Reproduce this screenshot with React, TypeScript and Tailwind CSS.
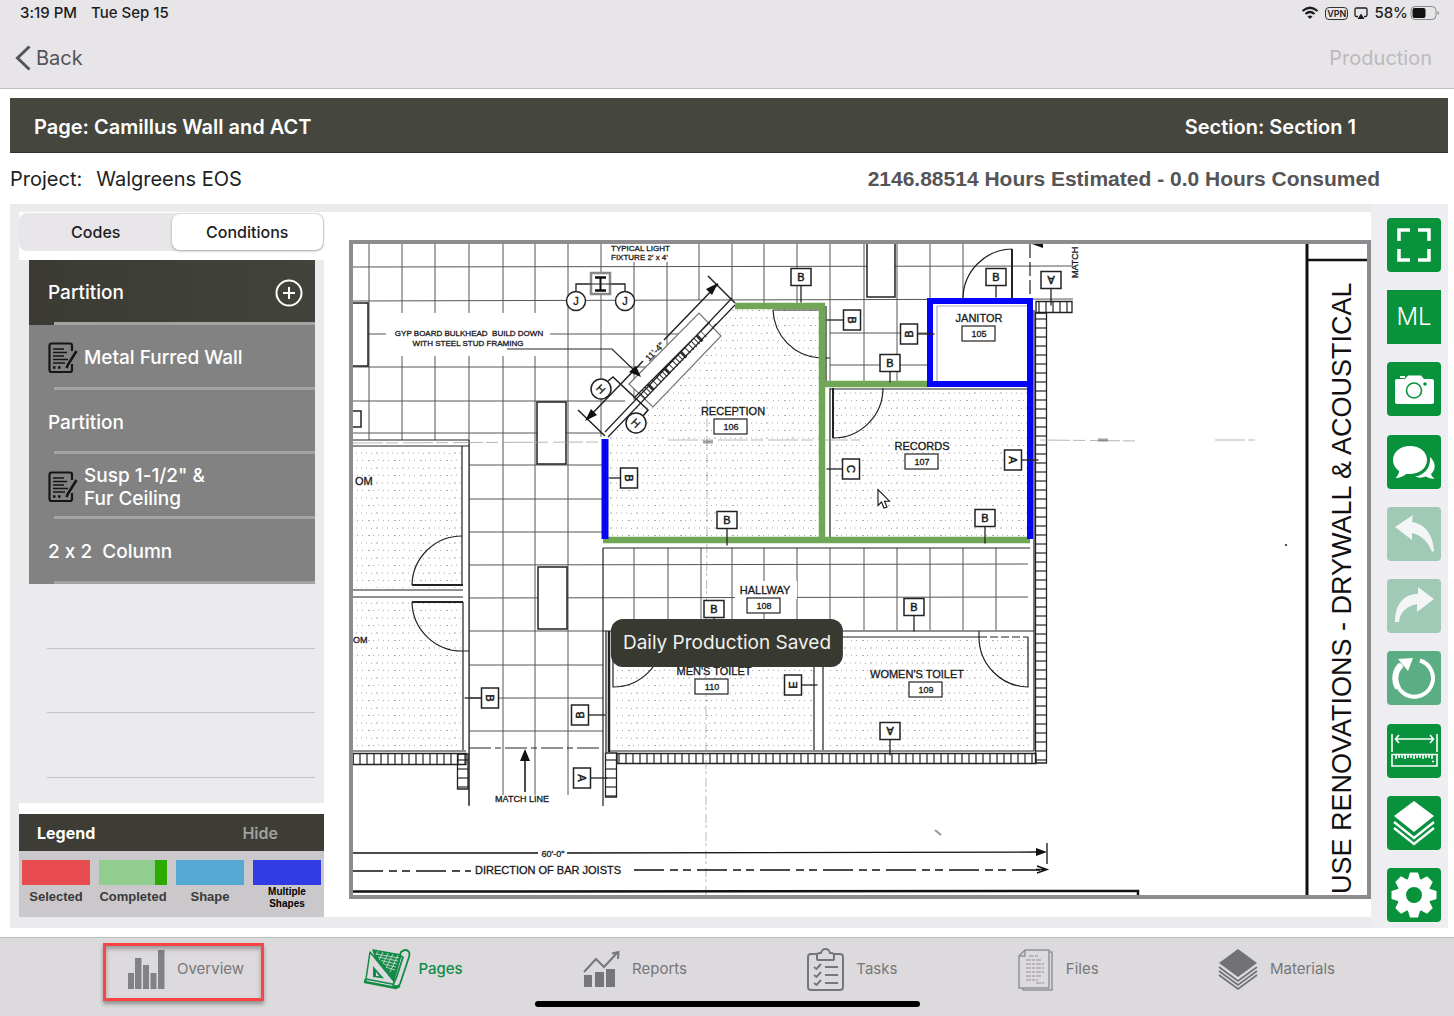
import React, { useState, ReactNode } from 'react';
import clsx from 'clsx';

interface Condition {
  name: string;
  note?: boolean;
}

interface Tag {
  x: number;
  y: number;
  label: string;
  rotate?: number;
  side: 'down' | 'left' | 'right';
  length: number;
}

interface Room {
  name: string;
  number: string;
  x: number;
  y: number;
  boxX: number;
}

const conditions: Condition[] = [
  { name: 'Partition' },
  { name: 'Metal Furred Wall', note: true },
  { name: 'Partition' },
  { name: 'Susp 1-1/2" &\nFur Ceiling', note: true },
  { name: '2 x 2  Column' },
];

const tags: Tag[] = [
  { x: 801, y: 277, label: 'B', side: 'down', length: 17 },
  { x: 852, y: 320, label: 'B', rotate: 90, side: 'left', length: 17 },
  { x: 909, y: 334, label: 'B', rotate: -90, side: 'right', length: 17 },
  { x: 890, y: 363, label: 'B', side: 'down', length: 11 },
  { x: 996, y: 277, label: 'B', side: 'down', length: 12 },
  { x: 1051, y: 280, label: 'A', rotate: 180, side: 'down', length: 17 },
  { x: 1013, y: 460, label: 'A', rotate: 90, side: 'right', length: 17 },
  { x: 851, y: 469, label: 'C', rotate: 90, side: 'left', length: 16 },
  { x: 985, y: 518, label: 'B', side: 'down', length: 17 },
  { x: 727, y: 520, label: 'B', side: 'down', length: 17 },
  { x: 629, y: 478, label: 'B', rotate: 90, side: 'left', length: 12 },
  { x: 714, y: 609, label: 'B', side: 'down', length: 12 },
  { x: 914, y: 607, label: 'B', side: 'down', length: 16 },
  { x: 793, y: 685, label: 'E', rotate: -90, side: 'right', length: 16 },
  { x: 890, y: 731, label: 'A', rotate: 180, side: 'down', length: 16 },
  { x: 490, y: 698, label: 'B', rotate: 90, side: 'left', length: 17 },
  { x: 580, y: 715, label: 'B', rotate: -90, side: 'right', length: 17 },
  { x: 582, y: 778, label: 'A', rotate: 90, side: 'right', length: 17 },
];

const rooms: Room[] = [
  { name: 'RECEPTION', number: '106', x: 733, y: 415, boxX: 731 },
  { name: 'RECORDS', number: '107', x: 922, y: 450, boxX: 922 },
  { name: 'JANITOR', number: '105', x: 979, y: 322, boxX: 979 },
  { name: 'HALLWAY', number: '108', x: 765, y: 594, boxX: 764 },
  { name: "MEN'S TOILET", number: '110', x: 714, y: 675, boxX: 712 },
  { name: "WOMEN'S TOILET", number: '109', x: 917, y: 678, boxX: 926 },
];

const legend = [
  { label: 'Selected', swatch: 'bg-[#e84c4e]' },
  { label: 'Completed', swatch: 'bg-[#90cd8e] border-r-[12px] border-[#2caa02]' },
  { label: 'Shape', swatch: 'bg-[#56a9d2]' },
  { label: 'Multiple Shapes', swatch: 'bg-[#323ae4]', small: true },
];

const gearTeeth = [0, 45, 90, 135, 180, 225, 270, 315];

// ---------- floor plan ----------

function PlanTag({ x, y, label, rotate = 0, side, length }: Tag) {
  const w = side === 'down' ? 20 : 17;
  const h = side === 'down' ? 17 : 20;
  const leader = {
    down: `M${x} ${y + h / 2}v${length}`,
    left: `M${x - w / 2} ${y}h${-length}`,
    right: `M${x + w / 2} ${y}h${length}`,
  }[side];
  return (
    <g>
      <rect x={x - w / 2} y={y - h / 2} width={w} height={h} fill="#fff" stroke="#222" strokeWidth="1.5" />
      <path d={leader} stroke="#222" strokeWidth="1.3" />
      <text
        x={x}
        y={y + 4}
        fontSize="11"
        textAnchor="middle"
        stroke="#222"
        strokeWidth="0.5"
        transform={`rotate(${rotate} ${x} ${y})`}
      >
        {label}
      </text>
    </g>
  );
}

function PlanRoom({ name, number, x, y, boxX }: Room) {
  return (
    <g>
      <text x={x} y={y} fontSize="11" textAnchor="middle" stroke="#222" strokeWidth="0.3">{name}</text>
      <rect x={boxX - 17} y={y + 4} width="33" height="15" fill="#fff" stroke="#222" strokeWidth="1.2" />
      <text x={boxX} y={y + 15} fontSize="9" textAnchor="middle" stroke="#222" strokeWidth="0.3">{number}</text>
    </g>
  );
}

function FloorPlan() {
  return (
    <svg
      viewBox="353 244 1014 651"
      preserveAspectRatio="xMidYMid slice"
      className="block h-full w-full font-['Liberation_Sans',sans-serif]"
      fill="#111"
      role="img"
      aria-label="Floor plan"
    >
      <defs>
        <pattern id="dots" width="26" height="15" patternUnits="userSpaceOnUse">
          <path
            d="M2 3h1M7 3.5h1M12 3h2M18 3h1M23 3h1M4 10.5h2M9 10.5h1M14 10h1M19 10.5h1M24 10.5h1"
            stroke="#aaa"
            strokeWidth="1"
          />
        </pattern>
        <pattern id="hatchH" width="7" height="20" patternUnits="userSpaceOnUse">
          <path d="M3 0v20" stroke="#222" strokeWidth="1.2" />
        </pattern>
        <pattern id="hatchV" width="20" height="9" patternUnits="userSpaceOnUse">
          <path d="M0 4h20" stroke="#222" strokeWidth="1.2" />
        </pattern>
      </defs>

      {/* ceiling grid */}
      <g stroke="#555" strokeWidth="1" fill="none">
        {[369, 402, 435].map(x => <path key={x} d={`M${x} 244V440`} />)}
        <path d="M469 244V805" />
        {[503, 535, 568].map(x => <path key={x} d={`M${x} 244V795`} />)}
        <path d="M601 244V437M634 262V400M667 262V345M699 244V300M732 244V300" />
        {[764, 797].map(x => <path key={x} d={`M${x} 244V303`} />)}
        {[830, 864, 897].map(x => <path key={x} d={`M${x} 244V383`} />)}
        {[930, 963].map(x => <path key={x} d={`M${x} 244V299`} />)}
        {[634, 668, 701, 732, 764, 797, 830, 864, 897, 930, 963, 996].map(x => (
          <path key={x} d={`M${x} 548V630`} />
        ))}
        <path d="M353 267L1073 266M353 301L1073 299M353 334H680M830 333H930M353 367H650M830 365H930M353 401H625M353 433H601" />
        {[465, 499, 532, 665, 698, 731].map(y => <path key={y} d={`M469 ${y}H603`} />)}
        <path d="M469 565L1028 564M469 598L1028 597M469 631H603" />
      </g>
      <path d="M386 313H550V356H386zM610 244H676V262H610zM735 581H797V599H735z" fill="#fff" />

      {/* rooms */}
      <path d="M605 436L735 303H826V541H605z" fill="#fff" />
      <path d="M605 440L735 308H820V536H609z" fill="url(#dots)" />
      <path d="M826 384H1035V548H826z" fill="#fff" />
      <path d="M834 390H1027V536H834z" fill="url(#dots)" />
      <path d="M930 300H1030V384H930z" fill="#fff" />
      <path d="M353 440H469V754H353z" fill="#fff" />
      <path d="M353 449H461V588H353zM353 600H461V748H353z" fill="url(#dots)" />
      <path d="M605 631H1035V752H605z" fill="#fff" />
      <path d="M613 640H813V748H613zM826 640H1030V748H826z" fill="url(#dots)" />

      <g stroke="#222" strokeWidth="1.2" fill="none">
        <path d="M353 440H469M353 446H469M462 446V585M469 440V806M353 590H463M353 597H463M463 602V750M353 751H466" />
        <path d="M412 585H463M412 602H463" strokeWidth="2" />
        <path d="M462 536A50 50 0 0 0 412 585M412 602A50 50 0 0 0 463 651H469" />
        <path d="M603 548V806M603 548H1030M603 631H1034M611 637H979M606 631V752M609 751H1034M814 637V750M823 637V750M1034 310V751" />
        <path d="M609 631V752" strokeWidth="2.5" />
        <path d="M613 637V687A50 50 0 0 0 663 637" />
        <path d="M979 631V637A50 50 0 0 0 1028 687V637" />
        <path d="M979 637H1028" strokeDasharray="8 3" />
        <path d="M773 310H823M773 310A50 50 0 0 0 820 358H830M826 306V384M830 388V540" />
        <path d="M833 388V438A50 50 0 0 0 883 388" />
        <path d="M833 388V438M1012 249V299" strokeWidth="2" />
        <path d="M1012 249A50 50 0 0 0 963 299M830 389H1030" />
        <path d="M1030 244V300" strokeDasharray="14 4" />
        <path d="M937 306V383M937 306H1028" stroke="#aab" />
        <path d="M469 748H603" strokeDasharray="22 4 6 4" />
      </g>

      {/* masonry */}
      <g stroke="#222" strokeWidth="1.3">
        <path d="M353 753.5H466V764.5H353z" fill="url(#hatchH)" />
        <path d="M457.5 754H468V789H457.5z" fill="url(#hatchV)" />
        <path d="M617 753.5H1036V763.5H617z" fill="url(#hatchH)" />
        <path d="M605.5 753H616.5V797H605.5z" fill="url(#hatchV)" />
        <path d="M1035.5 313H1046.5V763H1035.5z" fill="url(#hatchV)" />
        <path d="M1036 301.5H1072V312.5H1036z" fill="url(#hatchH)" />
      </g>

      {/* light fixtures */}
      <g fill="#fff" stroke="#222" strokeWidth="1.5">
        <path d="M867 240H895V297H867z" />
        <path d="M537 402H566V464H537z" />
        <path d="M538 567H567V629H538z" />
        <path d="M350 303H368V366H350z" />
        <path d="M350 411H361V427H350z" />
      </g>

      {/* structural column */}
      <path d="M576 291V284H625V291" fill="none" stroke="#222" strokeWidth="1.3" />
      <path d="M591 273H610V294H591z" fill="#fff" stroke="#888" strokeWidth="2.5" />
      <path d="M595 277.5H606M595 290.5H606" stroke="#111" strokeWidth="2.5" />
      <path d="M600.5 277V291" stroke="#111" strokeWidth="2" />
      <path d="M590 284H611" stroke="#222" strokeWidth="1" />
      <g fill="#fff" stroke="#222" strokeWidth="1.5">
        <circle cx="576" cy="301" r="9.5" />
        <circle cx="625" cy="301" r="9.5" />
      </g>
      <text x="576" y="305" fontSize="11" textAnchor="middle" stroke="#222" strokeWidth="0.3">J</text>
      <text x="625" y="305" fontSize="11" textAnchor="middle" stroke="#222" strokeWidth="0.3">J</text>

      {/* angled bulkhead */}
      <g stroke="#222" fill="none" strokeWidth="1.2">
        <path d="M629 384L699 313L721 336L653 407z" fill="#fff" stroke="#777" />
        <path d="M642 396L704 334" stroke="#333" strokeWidth="8" strokeDasharray="1 3 1 3 1 2 3 4 1 4" />
        <path d="M634 398L710 322M605 432L732 298M608 437L735 305M711 330L716 324" />
        <path d="M578 410L605 436M708 276L735 303" strokeWidth="1.5" />
        <path d="M587 419L643 361M664 340L718 284" strokeWidth="1.5" />
        <path d="M507 349H612L636 372" />
        <path d="M608 381L613 377L648 410L643 416" strokeWidth="1.6" />
      </g>
      <path d="M585 421L597 415L591 409zM718 283L706 289L712 295zM641 377L636 366L629 372zM525 749L520 761H530z" />
      <path d="M525 760V792" stroke="#111" strokeWidth="1.5" />
      <g fill="#fff" stroke="#222" strokeWidth="1.5">
        <circle cx="601" cy="389" r="10" />
        <circle cx="636" cy="423" r="10" />
      </g>
      <g stroke="#222" strokeWidth="0.3" textAnchor="middle">
        <text x="601" y="393" fontSize="11" transform="rotate(45 601 389)">H</text>
        <text x="636" y="427" fontSize="11" transform="rotate(45 636 423)">H</text>
        <text x="654" y="355" fontSize="9" transform="rotate(-45 654 351)">11'-4"</text>
      </g>

      {/* paper folds */}
      <path d="M353 443L600 442M668 440H860M1040 440L1140 441M1215 440H1255" stroke="#999" strokeDasharray="30 3 12 5" opacity="0.7" />
      <path d="M707 400V530L706 670V895" fill="none" stroke="#888" strokeDasharray="9 2 3 4" opacity="0.6" />
      <path d="M703 442H713M1098 440H1108" stroke="#666" strokeWidth="3" opacity="0.6" />
      <path d="M935 830L941 835" stroke="#999" strokeWidth="2" />
      <circle cx="1286" cy="545" r="1" />

      {/* takeoff shapes */}
      <g fill="none" strokeWidth="6.5">
        <path d="M735 306H822V540M603 540H1030M822 384H930" stroke="#70a757" />
        <path d="M605 439V539" stroke="#0505fa" strokeWidth="7" />
        <path d="M930 387V301H1030V539M930 384H1030" stroke="#0505fa" strokeWidth="6" />
      </g>

      {tags.map(tag => <PlanTag key={`${tag.x}-${tag.y}`} {...tag} />)}
      {rooms.map(room => <PlanRoom key={room.number} {...room} />)}

      <g stroke="#222" strokeWidth="0.3">
        <text x="611" y="251" fontSize="8">TYPICAL LIGHT</text>
        <text x="611" y="260" fontSize="8">FIXTURE 2' x 4'</text>
        <text x="469" y="336" fontSize="8" textAnchor="middle">GYP BOARD BULKHEAD&#160; BUILD DOWN</text>
        <text x="468" y="346" fontSize="8" textAnchor="middle">WITH STEEL STUD FRAMING</text>
        <text x="355" y="485" fontSize="11">OM</text>
        <text x="353" y="643" fontSize="9">OM</text>
        <text x="522" y="802" fontSize="9" textAnchor="middle">MATCH LINE</text>
        <text x="553" y="857" fontSize="9" textAnchor="middle">60'-0"</text>
        <text x="548" y="874" fontSize="11" textAnchor="middle">DIRECTION OF BAR JOISTS</text>
        <text x="1078" y="278" fontSize="9" transform="rotate(-90 1078 278)">MATCH</text>
      </g>

      <g stroke="#111" fill="none">
        <path d="M353 853H538M567 853L1040 852M1047 843V864" strokeWidth="1.3" />
        <path d="M353 871H471M634 870H1040" strokeWidth="1.5" strokeDasharray="30 6 8 5 8 6" />
        <path d="M1037 866L1047 869.5L1037 873M1036 869.5H1047" strokeWidth="1.5" />
        <path d="M353 891.5L1138 891V896" strokeWidth="2.5" />
        <path d="M1307 244V895" strokeWidth="3" />
        <path d="M1307 260H1367" strokeWidth="2.5" />
      </g>
      <path d="M1047 852L1036 848V856zM1032 244H1043V248z" />
      <text x="1351" y="894" fontSize="27" transform="rotate(-90 1351 894)">USE RENOVATIONS - DRYWALL &amp; ACOUSTICAL</text>

      {/* pointer */}
      <path d="M878 489.5V505.5L881.5 502L884 508L887 507L884.5 501.2H889.5z" fill="#fff" stroke="#111" strokeWidth="1.1" />
    </svg>
  );
}

// ---------- icons ----------

function NoteIcon() {
  return (
    <svg viewBox="0 0 30 32" className="h-8 w-[30px] shrink-0" fill="none" stroke="#151515">
      <path d="M24 9V3.5A2 2 0 0 0 22 1.5H3A2 2 0 0 0 1.5 3.5V28A2 2 0 0 0 3.5 30H22A2 2 0 0 0 24 28V22" strokeWidth="2.2" />
      <path d="M5 7H16M5 10.5H19M5 14H16M5 17.5H20M5 21H17" strokeWidth="1.5" />
      <path d="M5 25.5H7.5M10 25.5H12.5" strokeWidth="2.5" />
      <path d="M28.5 9L20 22.5L18.5 26" strokeWidth="2.6" />
    </svg>
  );
}

const tools: { label: string; tone: string; icon: ReactNode }[] = [
  {
    label: 'Full screen',
    tone: 'rounded bg-[#07923b]',
    icon: <path d="M12 23V12H23M31 12H42V23M42 31V42H31M23 42H12V31" fill="none" stroke="#fff" strokeWidth="3.5" />,
  },
  { label: 'ML', tone: 'bg-[#07923b]', icon: null },
  {
    label: 'Camera',
    tone: 'rounded bg-[#07923b]',
    icon: (
      <>
        <path d="M8 19Q8 17 10 17H18L21 13.5H34L37 17H45Q47 17 47 19V40Q47 42 45 42H10Q8 42 8 40zM13 14H18V16H13z" fill="#fff" />
        <circle cx="27" cy="28.5" r="7.5" fill="none" stroke="#07923b" strokeWidth="1.6" />
        <circle cx="38" cy="22" r="1.8" fill="#07923b" />
      </>
    ),
  },
  {
    label: 'Comments',
    tone: 'rounded bg-[#07923b]',
    icon: (
      <path
        d="M23 11C13.5 11 6 17 6 25C6 30 9 33.5 12 36C12 38.5 10.5 41 8.5 43C13 43 17 41 19 39C32 40 40 33.5 40 25C40 17 33 11 23 11zM43 22C48 26 50 34 44 39C44.5 41 46 42.5 48 43.5C44 44 41 43 39 41.5C35 43 31 43 28 41.5C38 40 44 32 43 22z"
        fill="#fff"
      />
    ),
  },
  {
    label: 'Undo',
    tone: 'rounded bg-[#a0cab5]',
    icon: <path d="M8 20L26 8L25 15C38 17 46 27 47 44L45 45C41 34 34 28 25 26V33z" fill="#f3f5f6" />,
  },
  {
    label: 'Redo',
    tone: 'rounded bg-[#a0cab5]',
    icon: <path d="M47 20L31 8V15C17 15 8 25 8 43H12C13 33 20 27 30 25V33z" fill="#f3f5f6" />,
  },
  {
    label: 'Reset',
    tone: 'rounded bg-[#5bae84]',
    icon: (
      <>
        <path d="M33 9.5A18.5 18.5 0 1 1 15 13.5" fill="none" stroke="#fff" strokeWidth="4" />
        <path d="M14 14A18.5 18.5 0 0 0 11 37" fill="none" stroke="#fff" strokeWidth="6" />
        <path d="M11 8L26 7L21 20z" fill="#fff" />
      </>
    ),
  },
  {
    label: 'Measure',
    tone: 'rounded bg-[#07923b]',
    icon: (
      <g fill="none" stroke="#fff" strokeWidth="1.6">
        <path d="M5 10V28M50 10V28M9 15H46M12 11L8.5 15L12 19M43 11L46.5 15L43 19" />
        <path d="M5 30.5H50V42H5zM9 31V35M12 31V34M15 31V34M18 31V35M21 31V34M24 31V34M27 31V35M30 31V34M33 31V34M36 31V35M39 31V34M42 31V34M45 31V35" />
        <path d="M45 37.5H47" />
      </g>
    ),
  },
  {
    label: 'Layers',
    tone: 'rounded bg-[#07923b]',
    icon: (
      <>
        <path d="M27 5L47 20L27 36L7 20z" fill="#fff" />
        <path d="M7 26L27 42L47 26M7 32L27 48L47 32" fill="none" stroke="#fff" strokeWidth="2.4" />
      </>
    ),
  },
  {
    label: 'Settings',
    tone: 'rounded bg-[#07923b]',
    icon: (
      <>
        <circle cx="27" cy="27" r="12.5" fill="none" stroke="#fff" strokeWidth="9" />
        {gearTeeth.map(a => (
          <path key={a} d="M21 11L23 4.5H31L33 11z" fill="#fff" transform={`rotate(${a} 27 27)`} />
        ))}
      </>
    ),
  },
];

const tabs: { label: string; icon: ReactNode; width: number; size: string; active?: boolean }[] = [
  {
    label: 'Overview',
    width: 38,
    size: 'w-[38px]',
    icon: <path d="M1 24h6v16H1zM8 9h6.5v31H8zM16 16h6v24h-6zM23.5 24h6v16h-6zM31 1h6.500v39H31z" fill="#828183" />,
  },
  {
    label: 'Pages',
    width: 46,
    size: 'w-[46px]',
    active: true,
    icon: (
      <g fill="none" stroke="#128b47" strokeWidth="1.5" strokeLinejoin="round">
        <path d="M9 1L37 6L29 34L16 22z" fill="#128b47" />
        <path
          d="M12 5L35 9M14 8L34 12M17 11.500L33 15M20 15L32 18M23 18.500L31 21M14 2L12 6M19 3L15 11M24 4L19 15M29 5L22 19M34 6L26 23"
          stroke="#dcdadd"
          strokeWidth="0.8"
        />
        <path d="M2 30L1 33L32 39L36 37" strokeWidth="2.5" />
        <path d="M6 3L33 36L2 30z" fill="#dcdadd" />
        <path d="M9 17L20 29.500L9 28z" fill="#128b47" stroke="none" />
        <path d="M12 23L15 27H12z" fill="#dcdadd" stroke="none" />
        <path d="M37 3Q42 -1 45 3Q46 5 45 8L36 35Q33 39 29 36L33 27L39 8Q35 7 37 3z" fill="#dcdadd" strokeWidth="1.8" />
      </g>
    ),
  },
  {
    label: 'Reports',
    width: 37,
    size: 'w-[37px]',
    icon: (
      <>
        <path d="M1 26h8v12H1zM12 23h9v15h-9zM23 20h9v18h-9z" fill="#777678" />
        <path d="M1 23L13 10L21 18L34 4M29 4.500L35.500 3L35 10" fill="none" stroke="#777678" strokeWidth="2" />
      </>
    ),
  },
  {
    label: 'Tasks',
    width: 37,
    size: 'w-[37px]',
    icon: (
      <g fill="none" stroke="#777678" strokeWidth="2">
        <path d="M10 5H4Q1 5 1 8V38Q1 41 4 41H33Q36 41 36 38V8Q36 5 33 5H27" />
        <path d="M10 10V6Q10 4 13 4H14Q15 0 18.5 0Q22 0 23 4H24Q27 4 27 6V10Q27 11 26 11H11Q10 11 10 10z" />
        <path d="M7 18L9.5 20L14 15M7 26L9.5 28L14 23M7 34L9.5 36L14 31M18 18H31M18 26H31M18 34H31" />
      </g>
    ),
  },
  {
    label: 'Files',
    width: 36,
    size: 'w-9',
    icon: (
      <g fill="none" stroke="#939294" strokeWidth="1.5">
        <path d="M7 1H31V39H1V7zM1 7H7V1M31 3H34V41H5V39" />
        <path d="M11 7H21M8 11H24M8 15H26M8 19H26M8 23H26M8 27H24M8 31H20M18 34H26" strokeDasharray="5 1 3 1" strokeWidth="1.2" />
      </g>
    ),
  },
  {
    label: 'Materials',
    width: 39,
    size: 'w-[39px]',
    icon: (
      <>
        <path d="M19 0L38 14L19 28L0 14z" fill="#727173" />
        <path d="M0 18L19 32L38 18M0 22L19 36L38 22M0 26L19 40L38 26" fill="none" stroke="#727173" strokeWidth="1.6" />
      </>
    ),
  },
];

// ---------- page sections ----------

function StatusBar() {
  return (
    <div className="flex h-[26px] items-center gap-3.5 pr-3.5 pl-5 text-[15px] font-medium text-[#1d1d1f]">
      <span>3:19 PM</span>
      <span>Tue Sep 15</span>
      <div className="ml-auto flex items-center gap-1.5">
        <svg viewBox="0 0 18 14" className="h-3.5 w-[18px]" fill="none" stroke="#1d1d1f" strokeWidth="2.2">
          <path d="M1.5 5Q9 -1.5 16.5 5M4.5 8Q9 4 13.5 8" />
          <path d="M6.5 10.5Q9 8.5 11.5 10.5L9 13z" fill="#1d1d1f" stroke="none" />
        </svg>
        <span className="rounded border border-[#333] px-px text-[9px] leading-[11px] font-semibold">VPN</span>
        <svg viewBox="0 0 14 13" className="h-[13px] w-3.5" fill="none" stroke="#1d1d1f" strokeWidth="1.3">
          <path d="M4 9.5H2.5Q1 9.5 1 8V2.5Q1 1 2.5 1H11.5Q13 1 13 2.5V8Q13 9.5 11.5 9.5H10" />
          <path d="M7 6.5L10.5 12H3.5z" fill="#1d1d1f" stroke="none" />
        </svg>
        <div className="flex items-center gap-0.5">
          <span>58%</span>
          <svg viewBox="0 0 30 14" className="h-3.5 w-[30px]">
            <rect x="1" y="0.5" width="25" height="13" rx="4" fill="none" stroke="#8b8a8c" />
            <rect x="2.5" y="2" width="13" height="10" rx="2" fill="#111" />
            <path d="M27.5 5V9Q29 8.5 29 7Q29 5.5 27.5 5z" fill="#8b8a8c" />
          </svg>
        </div>
      </div>
    </div>
  );
}

function Sidebar() {
  const [view, setView] = useState('Conditions');

  return (
    <aside className="flex w-[305px] shrink-0 flex-col">
      <div className="mt-px flex h-[38px] rounded-lg bg-[#e8e6e9] p-px">
        {['Codes', 'Conditions'].map(name => (
          <button
            key={name}
            onClick={() => setView(name)}
            className={clsx(
              'flex-1 rounded-lg text-base font-medium text-[#1c1c1e]',
              view === name && 'bg-white shadow-[0_1px_3px_rgba(0,0,0,0.3)]'
            )}
          >
            {name}
          </button>
        ))}
      </div>

      <div className="mt-[9px] flex-1 bg-[#ebebed] pr-[9px] pl-2.5">
        <ul className="grid h-[518px] grid-rows-8">
          {conditions.map((item, i) => (
            <li
              key={i}
              className={clsx(
                'flex flex-col pl-[19px]',
                i === 0 ? 'bg-linear-to-r from-[#3b3b33] to-[#42433a]' : 'bg-[#828282]'
              )}
            >
              <button className="flex flex-1 items-center gap-1.5 pt-1 pr-3 text-left text-[19px] leading-[23px] font-medium text-white">
                {item.note && <NoteIcon />}
                <span className="whitespace-pre-wrap">{item.name}</span>
                {i === 0 && (
                  <svg viewBox="0 0 28 28" className="ml-auto h-7 w-7" fill="none" stroke="#fff" strokeWidth="2">
                    <circle cx="14" cy="14" r="12.5" />
                    <path d="M14 8V20M8 14H20" />
                  </svg>
                )}
              </button>
              <div className="ml-1.5 h-[3px] bg-[#a3a3a3]" />
            </li>
          ))}
          {[5, 6, 7].map(i => (
            <li key={i} className="ml-[18px] border-b border-[#c4c3c6]" />
          ))}
        </ul>
      </div>

      <section className="mt-[11px]">
        <div className="flex h-[37px] items-center justify-between bg-[#3d3d36] pr-[46px] pl-[18px] text-base">
          <h2 className="font-bold text-white">Legend</h2>
          <button className="font-semibold text-[#a1a19d]">Hide</button>
        </div>
        <ul className="flex h-[66px] justify-between bg-[#cbc8cc] px-[3px] pt-[9px]">
          {legend.map(item => (
            <li key={item.label} className="flex w-[68px] flex-col">
              <div className={clsx('h-[25px]', item.swatch)} />
              <span
                className={clsx(
                  "flex justify-center text-center font-['Liberation_Sans',sans-serif] font-bold",
                  item.small ? 'pt-px text-[10px] leading-3 text-black' : 'pt-1 text-[13px] leading-4 text-[#3a3a3a]'
                )}
              >
                {item.label}
              </span>
            </li>
          ))}
        </ul>
      </section>
    </aside>
  );
}

function Toolbar() {
  return (
    <div className="flex w-[77px] shrink-0 flex-col justify-between bg-[#eeedf2] pt-3.5 pr-[7px] pb-1.5 pl-4">
      {tools.map(tool => (
        <button
          key={tool.label}
          aria-label={tool.label}
          className={clsx('flex h-[54px] w-[54px] items-center justify-center text-2xl font-light text-white', tool.tone)}
        >
          {tool.icon ? <svg viewBox="0 0 54 54" className="h-full w-full">{tool.icon}</svg> : tool.label}
        </button>
      ))}
    </div>
  );
}

function TabBar() {
  return (
    <nav className="border-t border-[#bdbbbe] bg-[#dcdadd]">
      <div className="flex h-[63px] items-center justify-between pr-[119px] pl-[127px]">
        {tabs.map((tab, i) => (
          <a
            key={tab.label}
            href="#"
            className={clsx(
              'relative flex items-center text-[15px]',
              tab.active ? 'gap-2 font-medium text-[#128b47]' : 'gap-3 text-[#777678]'
            )}
          >
            <svg viewBox={`0 0 ${tab.width} 42`} overflow="visible" className={clsx('h-[42px]', tab.size)}>
              {tab.icon}
            </svg>
            {tab.label}
            {i === 0 && (
              <span className="absolute -top-1.5 -right-5 -bottom-2.5 -left-6 border-[3px] border-[#fb4446] shadow-[0_3px_4px_rgba(0,0,0,0.35),inset_0_3px_4px_rgba(0,0,0,0.3)]" />
            )}
          </a>
        ))}
      </div>
      <div className="mx-auto mb-[9px] h-1.5 w-[385px] rounded-full bg-black" />
    </nav>
  );
}

export default function App() {
  return (
    <div className="relative flex min-h-screen flex-col bg-white font-['Inter',sans-serif] [font-feature-settings:'calt'_0]">
      <header className="border-b border-[#c3c1c4] bg-[#e7e5e8]">
        <StatusBar />
        <div className="flex h-[62px] items-center justify-between pt-0.5 pr-[22px] pl-3.5 text-xl">
          <button className="flex items-center gap-1 text-[#545356]">
            <svg viewBox="0 0 18 28" className="h-7 w-[18px]" fill="none" stroke="currentColor" strokeWidth="3">
              <path d="M15.5 2.5L3.5 14L15.5 25.5" />
            </svg>
            Back
          </button>
          <span className="text-[#bbb9bd]">Production</span>
        </div>
      </header>

      <div className="mt-[9px] mr-1.5 ml-2.5 flex h-[55px] items-center justify-between bg-[#45463d] pt-0.5 pr-[92px] pl-6 text-xl font-semibold text-white shadow-[inset_0_-1px_0_#33332a]">
        <h1>Page: Camillus Wall and ACT</h1>
        <span>Section: Section 1</span>
      </div>

      <div className="flex h-[51px] items-center justify-between pr-[74px] text-xl text-[#222]">
        <p className="flex gap-3.5 pl-2.5">
          <span>Project:</span>
          <span>Walgreens EOS</span>
        </p>
        <p className="font-['Liberation_Sans',sans-serif] text-[21px] font-bold text-[#555457]">
          2146.88514 Hours Estimated - 0.0 Hours Consumed
        </p>
      </div>

      <main className="mr-1.5 mb-[9px] ml-2.5 flex flex-1 bg-[#ebebed]">
        <div className="mt-2 mb-[11px] ml-[9px] flex min-w-0 flex-1 bg-white">
          <Sidebar />
          <div className="mt-7 mb-[18px] ml-[25px] h-[659px] min-w-0 flex-1 border-4 border-[#8e8c8f] bg-white">
            <FloorPlan />
          </div>
        </div>
        <Toolbar />
      </main>

      <TabBar />

      <div role="status" className="absolute bottom-[349px] left-1/2 flex h-12 -translate-x-1/2 items-center rounded-xl bg-[#383930] px-3 text-[19px] whitespace-nowrap text-[#f1f1ee]">
        Daily Production Saved
      </div>
    </div>
  );
}
